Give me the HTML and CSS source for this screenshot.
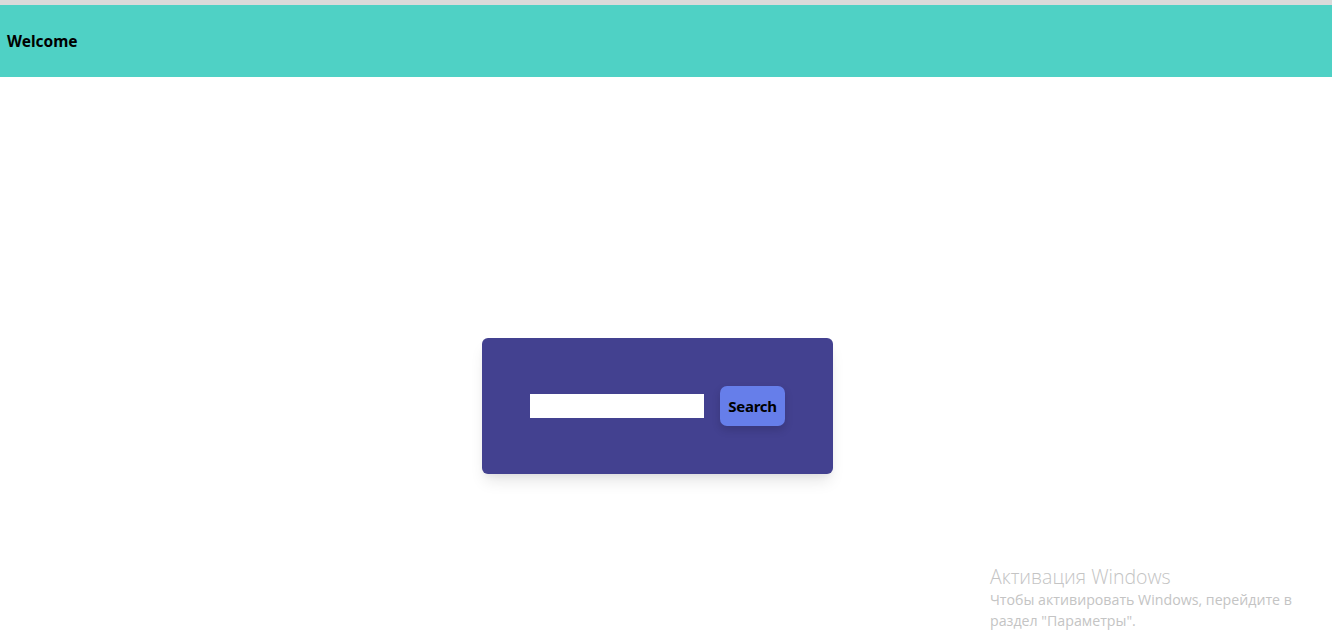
FILE: index.html
```html
<!DOCTYPE html>
<html>
<head>
<meta charset="utf-8">
<link rel="stylesheet" href="styles.css">
</head>
<body>
<div class="topline"></div>
<header class="header"><span class="title">Welcome</span></header>
<main class="main">
  <div class="card">
    <input class="search-input" type="text">
    <button class="search-btn">Search</button>
  </div>
</main>
<div class="watermark">
  <div class="wm-title">Активация Windows</div>
  <div class="wm-text">Чтобы активировать Windows, перейдите в<br>раздел "Параметры".</div>
</div>
</body>
</html>
```
FILE: styles.css
```css
html, body { margin: 0; padding: 0; background: #fff; }
body { font-family: "Noto Sans", "Open Sans", sans-serif; height: 638px; overflow: hidden; }
.topline { height: 5px; background: #dadada; }
.header {
  height: 72px;
  background: #4fd1c5;
  display: flex;
  align-items: center;
  padding-left: 7px;
  box-sizing: border-box;
}
.title { font-weight: 700; font-size: 15.5px; color: #000; }
.main {
  display: flex;
  justify-content: center;
  padding-top: 261px;
  padding-right: 17px;
}
.card {
  width: 351px;
  height: 136px;
  box-sizing: border-box;
  background: #434190;
  border-radius: 6px;
  display: flex;
  align-items: center;
  padding: 0 48px;
  gap: 16px;
  box-shadow: 0 10px 15px -3px rgba(0,0,0,0.1), 0 4px 6px -2px rgba(0,0,0,0.05);
}
.search-input {
  width: 174px;
  height: 24px;
  box-sizing: border-box;
  border: none;
  outline: none;
  background: #fff;
  padding: 0 4px;
  margin: 0;
}
.search-btn {
  width: 65px;
  height: 40px;
  border: none;
  border-radius: 7px;
  background: #667eea;
  color: #000;
  font-family: "Noto Sans", "Open Sans", sans-serif;
  font-weight: 700;
  font-size: 15px;
  padding: 0;
  box-shadow: 0 4px 8px rgba(0,0,0,0.15);
  letter-spacing: -0.3px;
}
.watermark {
  position: absolute;
  left: 990px;
  top: 564px;
  color: #c4c4c4;
  font-family: "Open Sans", "Noto Sans", sans-serif;
}
.wm-title { font-size: 19.5px; line-height: 25px; font-weight: 300; }
.wm-text { font-size: 14.2px; line-height: 21px; font-weight: 400; }
```
